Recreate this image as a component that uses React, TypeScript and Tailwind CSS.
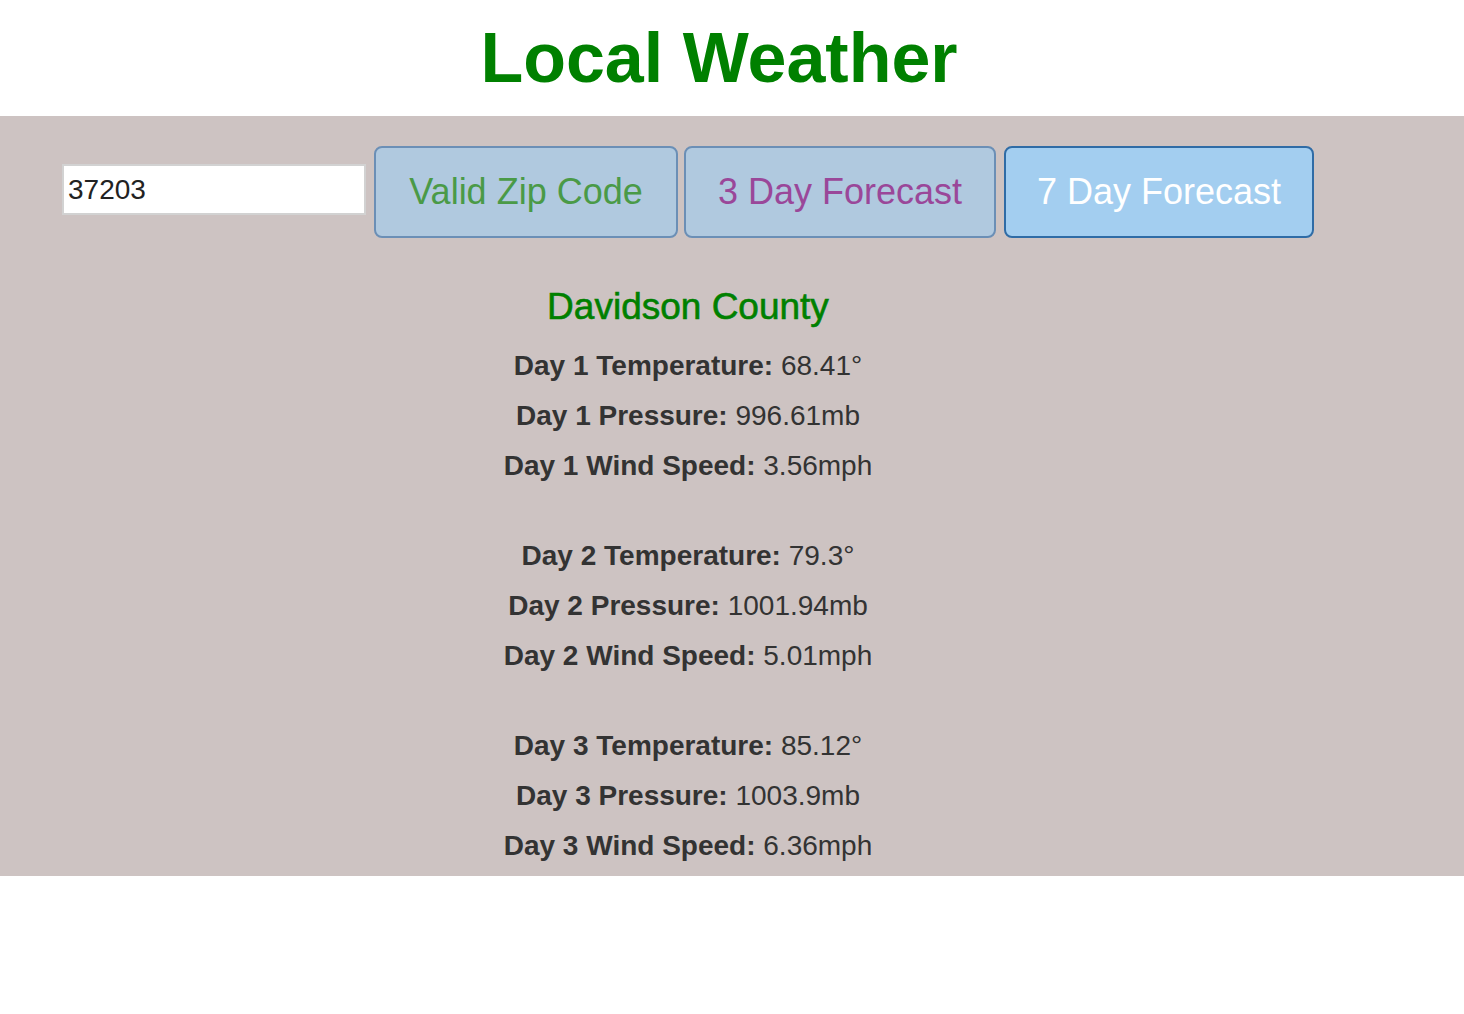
import React, { useState } from 'react';

const days = [
  { temp: '68.41°', pressure: '996.61mb', wind: '3.56mph' },
  { temp: '79.3°', pressure: '1001.94mb', wind: '5.01mph' },
  { temp: '85.12°', pressure: '1003.9mb', wind: '6.36mph' },
];

const Line: React.FC<{ label: string; value: string }> = ({ label, value }) => (
  <div className="h-[50px] leading-[50px] text-[28px] text-[#333333]">
    <span className="font-bold">{label}</span> {value}
  </div>
);

export default function App() {
  const [zip, setZip] = useState('37203');

  return (
    <div className="min-h-screen bg-white font-['Liberation_Sans',Arial,sans-serif]">
      <header className="h-[116px] pt-[23px] pr-[26px] text-center">
        <h1 className="text-[70px] leading-none font-bold text-[#008000]">Local Weather</h1>
      </header>

      <main className="bg-[#cdc3c2] pt-[30px] pb-[5px]">
        <div className="flex items-start pl-[62px]">
          <input
            value={zip}
            onChange={e => setZip(e.target.value)}
            className="mt-[18px] w-[304px] h-[51px] bg-white border-2 border-[#d2d2d2] px-1 text-[28px] text-[#222222] outline-none"
          />
          <button className="ml-2 w-[304px] h-[92px] rounded-lg border-2 border-[#6b8fb6] bg-[#b0c9df] text-[36px] text-[#4a9a47]">
            Valid Zip Code
          </button>
          <button className="ml-[6px] w-[312px] h-[92px] rounded-lg border-2 border-[#6b8fb6] bg-[#b0c9df] text-[36px] text-[#9a4799]">
            3 Day Forecast
          </button>
          <button className="ml-2 w-[310px] h-[92px] rounded-lg border-2 border-[#2f6ca6] bg-[#a3cef0] text-[36px] text-white">
            7 Day Forecast
          </button>
        </div>

        <section className="pr-[88px] text-center mt-[44px]">
          <h2 className="h-[50px] leading-[50px] text-[37px] text-[#008000] [-webkit-text-stroke:0.6px_#008000]">
            Davidson County
          </h2>
          <div className="mt-[9px] flex flex-col gap-[40px]">
            {days.map((d, i) => (
              <div key={i}>
                <Line label={`Day ${i + 1} Temperature:`} value={d.temp} />
                <Line label={`Day ${i + 1} Pressure:`} value={d.pressure} />
                <Line label={`Day ${i + 1} Wind Speed:`} value={d.wind} />
              </div>
            ))}
          </div>
        </section>
      </main>
    </div>
  );
}
